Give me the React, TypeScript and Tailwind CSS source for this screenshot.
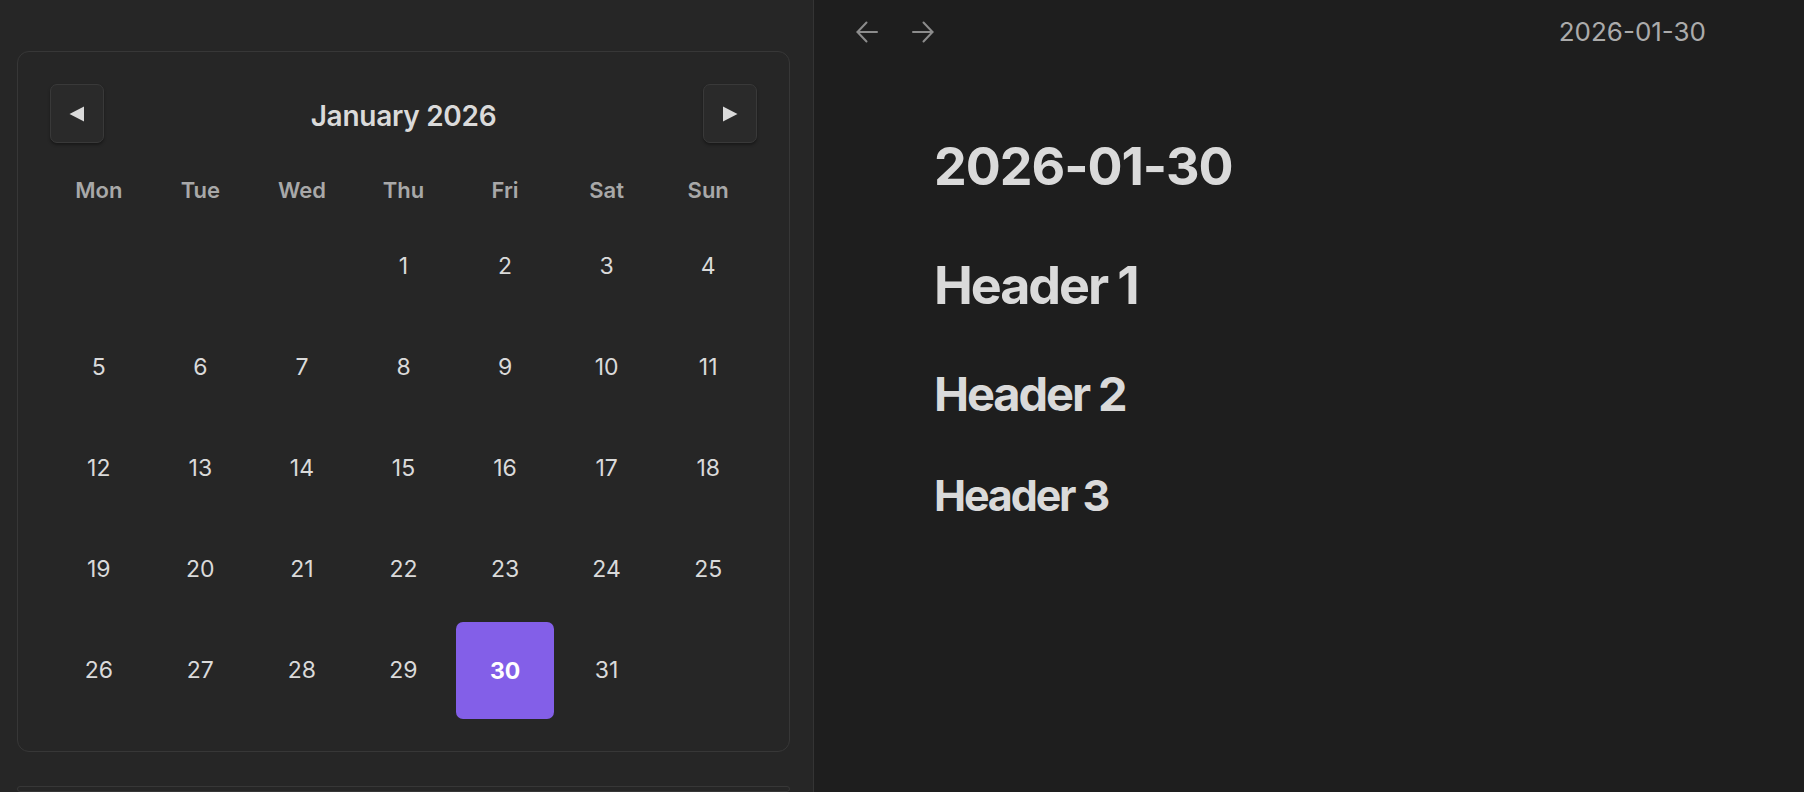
import React from "react";

const weekdays = ["Mon", "Tue", "Wed", "Thu", "Fri", "Sat", "Sun"];

function Triangle({ dir }: { dir: "left" | "right" }) {
  return (
    <svg width="16" height="16" viewBox="0 0 16 16" aria-hidden="true">
      {dir === "left" ? (
        <polygon points="15,0.5 15,15.5 0.5,8" fill="#dadada" />
      ) : (
        <polygon points="1,0.5 1,15.5 15.5,8" fill="#dadada" />
      )}
    </svg>
  );
}

function NavArrow({ dir }: { dir: "left" | "right" }) {
  return (
    <svg width="22" height="22" viewBox="0 0 22 22" fill="none" stroke="#8c8c8c" strokeWidth="2" strokeLinecap="round" strokeLinejoin="round" aria-hidden="true">
      {dir === "left" ? (
        <>
          <path d="M21 11H1.5" />
          <path d="M10.5 1.5 1.5 11l9 9.5" />
        </>
      ) : (
        <>
          <path d="M1 11h19.5" />
          <path d="M11.5 1.5 20.5 11l-9 9.5" />
        </>
      )}
    </svg>
  );
}

export default function App() {
  // January 2026 starts on Thursday (Mon-first index 3)
  const cells: (number | null)[] = [];
  for (let i = 0; i < 3; i++) cells.push(null);
  for (let d = 1; d <= 31; d++) cells.push(d);
  while (cells.length % 7 !== 0) cells.push(null);

  return (
    <div
      className="flex h-[792px] w-[1804px] overflow-hidden"
      style={{ fontFamily: "Inter, 'Noto Sans', sans-serif" }}
    >
      {/* Sidebar */}
      <aside className="flex w-[814px] shrink-0 flex-col gap-[34px] border-r border-[#343434] bg-[#262626] pl-[17px] pr-[23px] pt-[51px]">
        <div className="rounded-[12px] border border-[#373737] p-8">
          <div className="flex h-[59px] items-center justify-between">
            <button className="flex h-[59px] w-[54px] items-center justify-center rounded-[7px] border border-[#393939] bg-[#2a2a2a] shadow-[0_2px_3px_rgba(0,0,0,0.35)]">
              <Triangle dir="left" />
            </button>
            <div className="pt-[5px] text-[28px] font-semibold tracking-[-0.01em] text-[#dadada]">
              January 2026
            </div>
            <button className="flex h-[59px] w-[54px] items-center justify-center rounded-[7px] border border-[#393939] bg-[#2a2a2a] shadow-[0_2px_3px_rgba(0,0,0,0.35)]">
              <Triangle dir="right" />
            </button>
          </div>
          <div className="mt-[22px] grid h-[50px] grid-cols-7 items-center gap-1 text-center text-[22px] font-semibold text-[#a8a8a8]">
            {weekdays.map((w) => (
              <div key={w}>{w}</div>
            ))}
          </div>
          <div className="mt-[3px] grid grid-cols-7 auto-rows-[97px] gap-1">
            {cells.map((d, i) =>
              d === 30 ? (
                <div
                  key={i}
                  className="flex items-center justify-center rounded-[7px] bg-[#835fe8] pt-[2px] text-[23px] font-bold text-white"
                >
                  {d}
                </div>
              ) : (
                <div
                  key={i}
                  className="flex items-center justify-center text-[23px] text-[#dadada]"
                >
                  {d ?? ""}
                </div>
              )
            )}
          </div>
        </div>
        <div className="h-[60px] rounded-[12px] border border-[#373737]" />
      </aside>

      {/* Main */}
      <main className="flex flex-1 flex-col bg-[#1e1e1e]">
        <div className="flex h-[64px] items-center justify-between pl-[42px] pr-[98px]">
          <div className="flex items-center gap-[34px]">
            <NavArrow dir="left" />
            <NavArrow dir="right" />
          </div>
          <div className="text-[26px] leading-[1.2] text-[#ababab]">2026-01-30</div>
        </div>
        <div className="pl-[120px] text-[#dadada]">
          <div className="mt-[72px] text-[52px] font-bold leading-[1.2] tracking-[-0.02em]">
            2026-01-30
          </div>
          <h1 className="mt-[57px] text-[52px] font-bold leading-[1.2] tracking-[-0.04em]">
            Header 1
          </h1>
          <h2 className="mt-[48px] text-[47px] font-bold leading-[1.2] tracking-[-0.045em]">
            Header 2
          </h2>
          <h3 className="mt-[48px] text-[43px] font-bold leading-[1.2] tracking-[-0.05em]">
            Header 3
          </h3>
        </div>
      </main>
    </div>
  );
}
